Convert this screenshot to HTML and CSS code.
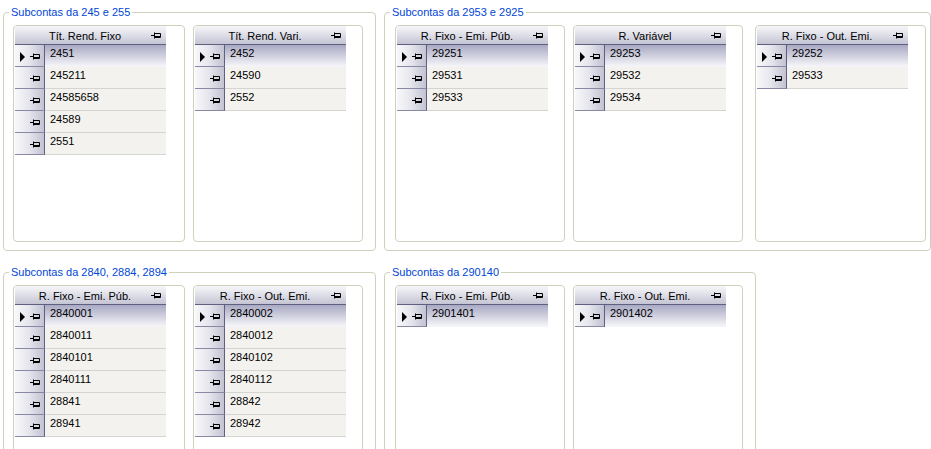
FILE: index.html
```html
<!DOCTYPE html>
<html lang="pt">
<head>
  <meta charset="UTF-8" />
  <title>Subcontas</title>
  <link rel="stylesheet" href="styles.css">
</head>
<body>
  <svg width="0" height="0" style="position:absolute">
    <defs>
      <symbol id="pin" viewBox="0 0 11 9">
        <path d="M0 4.5H3.5M3.5 1.5V7.5M4 2.5H9.5V6.5H4M4 5.5H9.5" fill="none" stroke="#000" stroke-width="1"/>
      </symbol>
    </defs>
  </svg>

  <div class="line">
    <fieldset class="group g1">
      <legend>Subcontas da 245 e 255</legend>
      <div class="panels">
        <div class="panel">
          <div class="grid">
            <div class="head"><span>Tít. Rend. Fixo</span><svg class="pin"><use href="#pin"/></svg></div>
            <div class="row current"><div class="sel"><i class="arrow"></i><svg class="pin"><use href="#pin"/></svg></div><div class="cell">2451</div></div>
            <div class="row"><div class="sel"><svg class="pin"><use href="#pin"/></svg></div><div class="cell">245211</div></div>
            <div class="row"><div class="sel"><svg class="pin"><use href="#pin"/></svg></div><div class="cell">24585658</div></div>
            <div class="row"><div class="sel"><svg class="pin"><use href="#pin"/></svg></div><div class="cell">24589</div></div>
            <div class="row"><div class="sel"><svg class="pin"><use href="#pin"/></svg></div><div class="cell">2551</div></div>
          </div>
        </div>
        <div class="panel">
          <div class="grid">
            <div class="head"><span>Tít. Rend. Vari.</span><svg class="pin"><use href="#pin"/></svg></div>
            <div class="row current"><div class="sel"><i class="arrow"></i><svg class="pin"><use href="#pin"/></svg></div><div class="cell">2452</div></div>
            <div class="row"><div class="sel"><svg class="pin"><use href="#pin"/></svg></div><div class="cell">24590</div></div>
            <div class="row"><div class="sel"><svg class="pin"><use href="#pin"/></svg></div><div class="cell">2552</div></div>
          </div>
        </div>
      </div>
    </fieldset>

    <fieldset class="group g2">
      <legend>Subcontas da 2953 e 2925</legend>
      <div class="panels">
        <div class="panel">
          <div class="grid">
            <div class="head"><span>R. Fixo - Emi. Púb.</span><svg class="pin"><use href="#pin"/></svg></div>
            <div class="row current"><div class="sel"><i class="arrow"></i><svg class="pin"><use href="#pin"/></svg></div><div class="cell">29251</div></div>
            <div class="row"><div class="sel"><svg class="pin"><use href="#pin"/></svg></div><div class="cell">29531</div></div>
            <div class="row"><div class="sel"><svg class="pin"><use href="#pin"/></svg></div><div class="cell">29533</div></div>
          </div>
        </div>
        <div class="panel">
          <div class="grid">
            <div class="head"><span>R. Variável</span><svg class="pin"><use href="#pin"/></svg></div>
            <div class="row current"><div class="sel"><i class="arrow"></i><svg class="pin"><use href="#pin"/></svg></div><div class="cell">29253</div></div>
            <div class="row"><div class="sel"><svg class="pin"><use href="#pin"/></svg></div><div class="cell">29532</div></div>
            <div class="row"><div class="sel"><svg class="pin"><use href="#pin"/></svg></div><div class="cell">29534</div></div>
          </div>
        </div>
        <div class="panel last">
          <div class="grid">
            <div class="head"><span>R. Fixo - Out. Emi.</span><svg class="pin"><use href="#pin"/></svg></div>
            <div class="row current"><div class="sel"><i class="arrow"></i><svg class="pin"><use href="#pin"/></svg></div><div class="cell">29252</div></div>
            <div class="row"><div class="sel"><svg class="pin"><use href="#pin"/></svg></div><div class="cell">29533</div></div>
          </div>
        </div>
      </div>
    </fieldset>
  </div>

  <div class="line second">
    <fieldset class="group g1 open">
      <legend>Subcontas da 2840, 2884, 2894</legend>
      <div class="panels">
        <div class="panel">
          <div class="grid">
            <div class="head"><span>R. Fixo - Emi. Púb.</span><svg class="pin"><use href="#pin"/></svg></div>
            <div class="row current"><div class="sel"><i class="arrow"></i><svg class="pin"><use href="#pin"/></svg></div><div class="cell">2840001</div></div>
            <div class="row"><div class="sel"><svg class="pin"><use href="#pin"/></svg></div><div class="cell">2840011</div></div>
            <div class="row"><div class="sel"><svg class="pin"><use href="#pin"/></svg></div><div class="cell">2840101</div></div>
            <div class="row"><div class="sel"><svg class="pin"><use href="#pin"/></svg></div><div class="cell">2840111</div></div>
            <div class="row"><div class="sel"><svg class="pin"><use href="#pin"/></svg></div><div class="cell">28841</div></div>
            <div class="row"><div class="sel"><svg class="pin"><use href="#pin"/></svg></div><div class="cell">28941</div></div>
          </div>
        </div>
        <div class="panel">
          <div class="grid">
            <div class="head"><span>R. Fixo - Out. Emi.</span><svg class="pin"><use href="#pin"/></svg></div>
            <div class="row current"><div class="sel"><i class="arrow"></i><svg class="pin"><use href="#pin"/></svg></div><div class="cell">2840002</div></div>
            <div class="row"><div class="sel"><svg class="pin"><use href="#pin"/></svg></div><div class="cell">2840012</div></div>
            <div class="row"><div class="sel"><svg class="pin"><use href="#pin"/></svg></div><div class="cell">2840102</div></div>
            <div class="row"><div class="sel"><svg class="pin"><use href="#pin"/></svg></div><div class="cell">2840112</div></div>
            <div class="row"><div class="sel"><svg class="pin"><use href="#pin"/></svg></div><div class="cell">28842</div></div>
            <div class="row"><div class="sel"><svg class="pin"><use href="#pin"/></svg></div><div class="cell">28942</div></div>
          </div>
        </div>
      </div>
    </fieldset>

    <fieldset class="group g4 open">
      <legend>Subcontas da 290140</legend>
      <div class="panels">
        <div class="panel">
          <div class="grid">
            <div class="head"><span>R. Fixo - Emi. Púb.</span><svg class="pin"><use href="#pin"/></svg></div>
            <div class="row current"><div class="sel"><i class="arrow"></i><svg class="pin"><use href="#pin"/></svg></div><div class="cell">2901401</div></div>
          </div>
        </div>
        <div class="panel">
          <div class="grid">
            <div class="head"><span>R. Fixo - Out. Emi.</span><svg class="pin"><use href="#pin"/></svg></div>
            <div class="row current"><div class="sel"><i class="arrow"></i><svg class="pin"><use href="#pin"/></svg></div><div class="cell">2901402</div></div>
          </div>
        </div>
      </div>
    </fieldset>
  </div>
</body>
</html>
```

FILE: styles.css
```css
html, body { margin: 0; padding: 0; background: #fff; }
body { font-family: "Liberation Sans", Arial, sans-serif; font-size: 11px; color: #000; padding: 5px 0 0 3px; height: 449px; overflow: hidden; box-sizing: border-box; }

.line { display: flex; gap: 8px; }
.line.second { margin-top: 14px; }

.group { margin: 0; padding: 6px 9px 8px 9px; border: 1px solid #d0d0bf; border-radius: 4px; box-sizing: border-box; min-width: 0; flex: none; }
.group legend { color: #0046d5; padding: 0 2px; margin-left: -4px; line-height: 14px; font-size: 11px; }
.group.g1 { width: 373px; }
.group.g2 { width: 547px; padding-left: 10px; padding-right: 4px; }
.group.g4 { width: 372px; padding-left: 10px; }
.g2 legend, .g4 legend { margin-left: -5px; }
.group.open { height: 220px; }

.panels { display: flex; gap: 8px; }
.panel { flex: none; width: 170px; height: 217px; box-sizing: border-box; border: 1px solid #d0d0bf; border-radius: 4px; padding: 0 1px; background: #fff; }
.panel:first-child { width: 172px; }
.g2 .panel:first-child, .g4 .panel:first-child { width: 170px; }
.panel.last { margin-left: 4px; width: 171px; }
.open .panel { height: 200px; }

.grid { width: 151px; }

.head { height: 18px; border-bottom: 1px solid #5f5f80; background: linear-gradient(#f6f6f9, #dcdce6 55%, #c4c4d4); display: flex; align-items: center; }
.head span { flex: 1; text-align: center; padding-left: 4px; padding-top: 1px; }
.head .pin { width: 11px; height: 9px; margin-right: 4px; }

.row { display: flex; height: 22px; }
.sel { flex: none; width: 30px; height: 22px; box-sizing: border-box; border-right: 1px solid #5f5f80; border-bottom: 1px solid #8888a4; background: linear-gradient(90deg, #f8f8fa, #e4e4ec 50%, #c2c2d2); display: flex; align-items: center; justify-content: flex-end; padding-right: 3px; }
.sel .pin { width: 11px; height: 9px; margin-top: 2px; }
.arrow { width: 0; height: 0; border-top: 5px solid transparent; border-bottom: 5px solid transparent; border-left: 5px solid #000; margin-right: auto; margin-left: 5px; margin-top: 2px; }
.cell { flex: 1; background: #f3f2ee; border-bottom: 1px solid #d4d4d0; box-sizing: border-box; padding: 2px 0 0 5px; line-height: 13px; }
.row.current .cell { background: linear-gradient(#a9a9c4, #d2d2e0 55%, #f4f4f8); border-bottom-color: #f4f4f8; }
```
